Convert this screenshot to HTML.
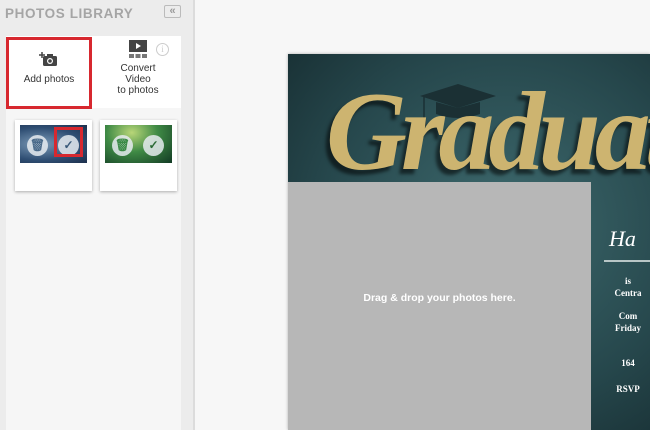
<!DOCTYPE html>
<html><head><style>
*{margin:0;padding:0;box-sizing:border-box}
body{width:650px;height:430px;overflow:hidden;background:#f7f7f7;font-family:"Liberation Sans",sans-serif;position:relative}
.side{position:absolute;left:0;top:0;width:195px;height:430px;background:#ececec;border-right:2px solid #dcdcdc}
.title{position:absolute;left:5px;top:6px;font-size:13.5px;font-weight:bold;color:#a5a5a5;letter-spacing:0.6px}
.coll{position:absolute;left:164px;top:5px;width:17px;height:13px;border:1px solid #bbb;border-radius:2px;font-size:11px;color:#999;text-align:center;line-height:11px;font-weight:bold}
.panel{position:absolute;left:6px;top:36px;width:175px;height:394px;background:#f6f6f6}
.btns{position:absolute;left:0;top:0;width:175px;height:72px;background:#fff}
.add{position:absolute;left:0;top:1px;width:86px;height:72px;border:3px solid #d7282f;background:#fff;text-align:center;font-size:10px;color:#333}
.conv{position:absolute;left:92px;top:4px;width:80px;text-align:center;font-size:10px;color:#333;line-height:11px}
.info{position:absolute;left:150px;top:7px;width:13px;height:13px;border:1px solid #ccc;border-radius:50%;font-size:9px;color:#ccc;text-align:center;line-height:11px;font-family:"Liberation Serif",serif}
.thumb{position:absolute;top:84px;width:77px;height:71px;background:#fff;box-shadow:0 1px 3px rgba(0,0,0,.3)}
.img{position:absolute;left:5px;top:5px;width:67px;height:38px}
.c{position:absolute;top:10px;width:21px;height:21px;border-radius:50%;background:rgba(230,235,240,.85);font-size:12px;text-align:center;line-height:21px;font-weight:bold}
.card{position:absolute;left:288px;top:54px;width:362px;height:376px;background:radial-gradient(ellipse at 60% 45%,#3e6a6e,#26474c 60%,#162c30);box-shadow:0 0 3px rgba(0,0,0,.3)}
.drop{position:absolute;left:0;top:128px;width:303px;height:248px;background:#b7b7b7;color:#fff;font-size:10.5px;font-weight:bold;text-align:center;padding-top:110px}
.grad{position:absolute;left:38px;top:14px;font-family:"Liberation Serif",serif;font-style:italic;font-weight:bold;font-size:112px;color:#cdb470;letter-spacing:-6px;text-shadow:-4px 5px 3px rgba(0,0,0,.55);white-space:nowrap}
.rt{position:absolute;left:303px;width:60px;color:#fff;font-family:"Liberation Serif",serif;font-size:9px;font-weight:bold;text-align:center}
</style></head><body>
<div class="side">
<div class="title">PHOTOS LIBRARY</div>
<div class="coll">«</div>
<div class="panel">
<div class="btns">
<div class="add"><svg width="20" height="18" viewBox="0 0 20 18" style="margin-top:10px"><path d="M3 2v6M0 5h6" stroke="#444" stroke-width="1.5"/><rect x="4" y="6" width="14" height="10" rx="1.5" fill="#444"/><rect x="8" y="4" width="6" height="3" fill="#444"/><circle cx="11" cy="11" r="3" fill="#fff"/><circle cx="11" cy="11" r="1.8" fill="#444"/></svg><div style="margin-top:3px">Add photos</div></div>
<div class="conv"><svg width="18" height="20" viewBox="0 0 18 20"><rect x="0" y="0" width="18" height="12" fill="#444"/><path d="M7 3l5 3-5 3z" fill="#fff"/><rect x="0" y="14" width="5" height="4" fill="#777"/><rect x="6.5" y="14" width="5" height="4" fill="#777"/><rect x="13" y="14" width="5" height="4" fill="#777"/></svg><div>Convert<br>Video<br>to photos</div></div>
<div class="info">i</div>
</div>
<div class="thumb" style="left:9px"><div class="img" style="background:radial-gradient(ellipse at 30% 50%,#7c9bb8,#2f4e73 60%,#1c2f4c)"></div>
<div class="c" style="left:12px;top:15px;color:#4a6a8a">🗑</div><div class="c" style="left:43px;top:15px;color:#3a5a7a">✓</div>
<div style="position:absolute;left:39px;top:7px;width:29px;height:30px;border:3px solid #d7282f"></div></div>
<div class="thumb" style="left:94px"><div class="img" style="background:radial-gradient(ellipse at 40% 20%,#b8d678,#3f8a45 45%,#123a24)"></div>
<div class="c" style="left:12px;top:15px;color:#3a8a45">🗑</div><div class="c" style="left:43px;top:15px;color:#2a6a35">✓</div></div>
</div>
</div>
<div class="card">
<svg style="position:absolute;left:130px;top:28px" width="80" height="48" viewBox="0 0 80 48"><path d="M2 14L40 2 78 14 40 26z" fill="#1b3034"/><path d="M18 20v12q22 8 44 0V20L40 26z" fill="#1b3034"/><path d="M6 15v22" stroke="#1b3034" stroke-width="1.5"/><rect x="4" y="36" width="4" height="8" fill="#1b3034"/></svg>
<div class="drop">Drag &amp; drop your photos here.</div>
<div class="grad">Graduat</div>
<div class="rt" style="top:172px;font-size:22px;font-weight:normal;font-style:italic;text-align:left;padding-left:18px">Ha</div>
<div style="position:absolute;left:316px;top:206px;width:46px;height:2px;background:#b8c6c6"></div>
<div class="rt" style="top:221px;line-height:12px;padding-left:14px">is<br>Centra</div>
<div class="rt" style="top:256px;line-height:12px;padding-left:14px">Com<br>Friday</div>
<div class="rt" style="top:304px;padding-left:14px">164</div>
<div class="rt" style="top:330px;padding-left:14px">RSVP</div>
</div>
</body></html>
